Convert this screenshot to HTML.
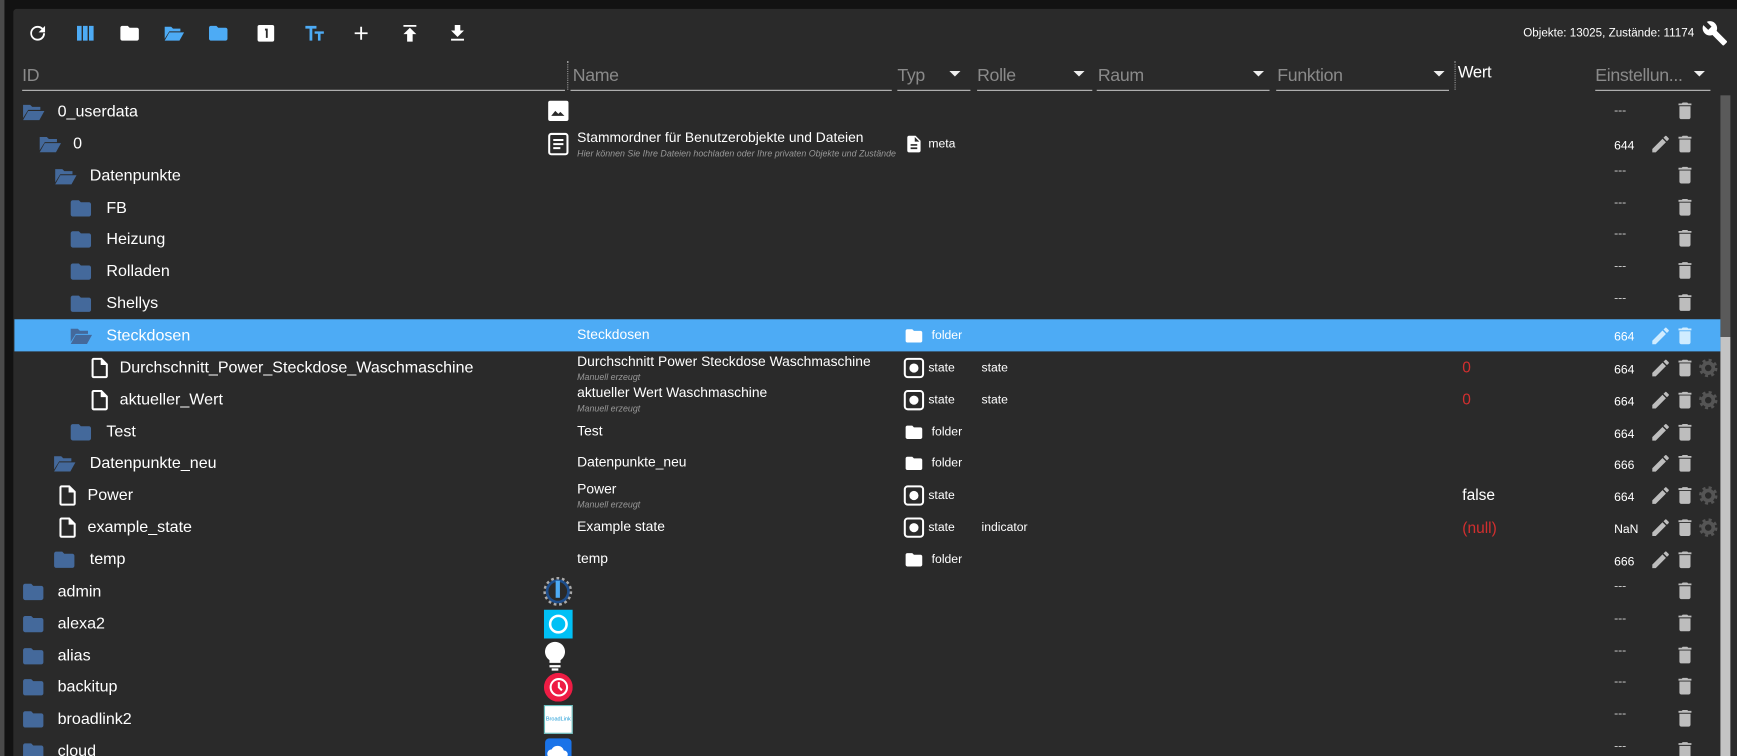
<!DOCTYPE html>
<html><head><meta charset="utf-8">
<style>
html,body{margin:0;padding:0;width:1737px;height:756px;overflow:hidden;background:#121212;}
#w{position:absolute;left:0;top:0;width:1568px;height:682px;overflow:hidden;transform:scale(1.1078,1.1085);transform-origin:0 0;font-family:"Liberation Sans",sans-serif;color:#fff;}
.lstrip{position:absolute;left:0;top:0;width:4px;height:682px;background:#4a4a4a}
.panel{position:absolute;left:12px;top:8px;width:1556px;height:674px;background:#2a2a2a;border-radius:3px 0 0 0}
.a{position:absolute;white-space:nowrap}
.tb{position:absolute;top:20px;width:20px;height:20px}
.h{position:absolute;top:60px;font-size:16px;color:#8a8a8a;letter-spacing:-0.3px}
.ul{position:absolute;top:81px;height:1px;background:#bdbdbd}
.arr{position:absolute;top:64px;width:0;height:0;border-left:5px solid transparent;border-right:5px solid transparent;border-top:5px solid #eee}
.row{position:absolute;left:13px;width:1540px;height:29px}
.sel{background:#4dabf5}
.row .a{top:0;line-height:29px}
.id{font-size:14.5px;color:#fff;margin-top:1px}
.nm{font-size:12.5px;color:#fff}
.sub{font-size:8px;color:#999;font-style:italic}
.ty{font-size:11px;margin-top:2px}
.perm{font-size:11px;left:1444px}
.dash{font-size:11px;left:1444px;color:#ccc}
svg{display:block}
</style></head><body>
<div id="w">
<div class="lstrip"></div>
<div class="panel"></div>

<svg class="tb" style="left:24px" viewBox="0 0 24 24"><path fill="#fff" d="M17.65 6.350A7.960 7.960 0 0012 4a8 8 0 108 8h-2.1A6 6 0 1112 6c1.66 0 3.14.69 4.22 1.78L13 11h7V4l-2.35 2.35z"/></svg>
<svg class="tb" style="left:67px" viewBox="0 0 24 24"><path fill="#4dabf5" d="M3 4h5v16H3zM9.5 4h5v16h-5zM16 4h5v16h-5z"/></svg>
<svg class="tb" style="left:107px" viewBox="0 0 24 24"><path fill="#fff" d="M10 4H4c-1.1 0-2 .9-2 2v12c0 1.1.9 2 2 2h16c1.1 0 2-.9 2-2V8c0-1.1-.9-2-2-2h-8l-2-2z"/></svg>
<svg class="tb" style="left:147px" viewBox="0 0 24 24"><path fill="#4dabf5" d="M2 5h7l2 2h8v3H7l-5 8zM7 11h16l-5 9H2z"/></svg>
<svg class="tb" style="left:187px" viewBox="0 0 24 24"><path fill="#4dabf5" d="M10 4H4c-1.1 0-2 .9-2 2v12c0 1.1.9 2 2 2h16c1.1 0 2-.9 2-2V8c0-1.1-.9-2-2-2h-8l-2-2z"/></svg>
<svg class="tb" style="left:230px" viewBox="0 0 24 24"><rect x="3" y="3" width="18" height="18" rx="2" fill="#fff"/><path fill="#2a2a2a" d="M11 7h3v10h-2V9h-1z"/></svg>
<svg class="tb" style="left:274px" viewBox="0 0 24 24"><path fill="#4dabf5" d="M2 4h12v3H9.5v13h-3V7H2zM12 10h10v2.5h-3.6V20h-2.8v-7.5H12z"/></svg>
<svg class="tb" style="left:316px" viewBox="0 0 24 24"><path fill="#fff" d="M19 13h-6v6h-2v-6H5v-2h6V5h2v6h6z"/></svg>
<svg class="tb" style="left:360px" viewBox="0 0 24 24"><path fill="#fff" d="M5 3h14v2H5zM12 6l-7 7h4v8h6v-8h4z"/></svg>
<svg class="tb" style="left:403px" viewBox="0 0 24 24"><path fill="#fff" d="M19 9h-4V3H9v6H5l7 7 7-7zM5 18v2h14v-2z"/></svg>
<div class="a" style="left:1375px;top:24px;font-size:10.5px;color:#fff">Objekte: 13025, Zustände: 11174</div>
<svg class="tb" style="left:1536px;top:18px;width:24px;height:24px" viewBox="0 0 24 24"><path fill="#fff" d="M22.7 19l-9.1-9.1c.9-2.3.4-5-1.5-6.9-2-2-5-2.4-7.4-1.3L9 6 6 9 1.6 4.7C.4 7.1.9 10.1 2.9 12.1c1.9 1.9 4.6 2.4 6.9 1.5l9.1 9.1c.4.4 1 .4 1.4 0l2.3-2.3c.5-.4.5-1.1.1-1.4z"/></svg>

<div class="h" style="left:20px">ID</div><div class="ul" style="left:20px;width:490px"></div>
<div class="a" style="left:512px;top:55px;height:26px;border-left:1px dotted #999"></div>
<div class="h" style="left:517px">Name</div><div class="ul" style="left:515px;width:290px"></div>
<div class="h" style="left:810px">Typ</div><div class="ul" style="left:810px;width:66px"></div><div class="arr" style="left:857px"></div>
<div class="h" style="left:882px">Rolle</div><div class="ul" style="left:882px;width:104px"></div><div class="arr" style="left:969px"></div>
<div class="h" style="left:991px">Raum</div><div class="ul" style="left:990px;width:156px"></div><div class="arr" style="left:1131px"></div>
<div class="h" style="left:1153px">Funktion</div><div class="ul" style="left:1152px;width:156px"></div><div class="arr" style="left:1294px"></div>
<div class="a" style="left:1313px;top:55px;height:26px;border-left:1px dotted #999"></div>
<div class="h" style="left:1316px;top:57px;color:#fff;font-size:15px">Wert</div>
<div class="h" style="left:1440px">Einstellun...</div><div class="ul" style="left:1440px;width:104px"></div><div class="arr" style="left:1529px"></div>

<div class="a" style="left:1553px;top:86px;width:9px;height:218px;background:#5a5a5a"></div>
<div class="a" style="left:1553px;top:304px;width:9px;height:378px;background:#c4c4c4"></div>

<svg width="0" height="0" style="position:absolute">
<defs>
<symbol id="fc" viewBox="0 0 24 24"><path fill="#44699b" d="M10 4H4c-1.1 0-2 .9-2 2v12c0 1.1.9 2 2 2h16c1.1 0 2-.9 2-2V8c0-1.1-.9-2-2-2h-8l-2-2z"/></symbol>
<symbol id="fo" viewBox="0 0 24 24"><path fill="#44699b" d="M2 5h7l2 2h8v3H7l-5 8zM7 11h16l-5 9H2z"/></symbol>
<symbol id="fw" viewBox="0 0 24 24"><path fill="#fff" d="M10 4H4c-1.1 0-2 .9-2 2v12c0 1.1.9 2 2 2h16c1.1 0 2-.9 2-2V8c0-1.1-.9-2-2-2h-8l-2-2z"/></symbol>
<symbol id="fi" viewBox="0 0 24 24"><path fill="#fff" d="M14 2H6c-1.1 0-2 .9-2 2v16c0 1.1.9 2 2 2h12c1.1 0 2-.9 2-2V8l-6-6zM6 20V4h7v5h5v11H6z"/></symbol>
<symbol id="tr" viewBox="0 0 24 24"><path fill="#bdbdbd" d="M6 19c0 1.1.9 2 2 2h8c1.1 0 2-.9 2-2V7H6v12zM19 4h-3.5l-1-1h-5l-1 1H5v2h14V4z"/></symbol>
<symbol id="pe" viewBox="0 0 24 24"><path fill="#bdbdbd" d="M3 17.25V21h3.75L17.81 9.94l-3.75-3.75L3 17.25zM20.71 7.04a1 1 0 000-1.41l-2.34-2.34a1 1 0 00-1.41 0l-1.83 1.83 3.75 3.75 1.83-1.83z"/></symbol>
<symbol id="ge" viewBox="0 0 24 24"><circle cx="12" cy="12" r="8.5" fill="none" stroke="#555" stroke-width="3" stroke-dasharray="3.3 3.4"/><circle cx="12" cy="12" r="5.5" fill="none" stroke="#555" stroke-width="4"/></symbol>
<symbol id="st" viewBox="0 0 24 24"><rect x="3" y="3" width="18" height="18" rx="3" fill="none" stroke="#fff" stroke-width="2"/><circle cx="12" cy="12" r="4.5" fill="#fff"/></symbol>
</defs></svg>

<div class="row" style="top:86px">
 <svg class="a" style="left:6px;top:4px;width:22px;height:22px"><use href="#fo"/></svg>
 <div class="a id" style="left:39px">0_userdata</div>
 <svg class="a" style="left:480px;top:3px;width:22px;height:22px" viewBox="0 0 24 24"><rect x="2" y="2" width="20" height="20" rx="2" fill="#fff"/><path d="M5 17l4-5 3 3 2-2 4 4z" fill="#2a2a2a"/></svg>
 <div class="a dash">---</div><svg class="a" style="left:1498px;top:4px;width:20px;height:20px"><use href="#tr"/></svg>
</div>
<div class="row" style="top:115px">
 <svg class="a" style="left:21px;top:4px;width:22px;height:22px"><use href="#fo"/></svg>
 <div class="a id" style="left:53px">0</div>
 <svg class="a" style="left:480px;top:4px;width:22px;height:22px" viewBox="0 0 24 24"><rect x="3" y="2" width="18" height="20" rx="2" fill="none" stroke="#fff" stroke-width="2"/><path fill="#fff" d="M7 7h10v2H7zM7 11h10v2H7zM7 15h7v2H7z"/></svg>
 <div class="a nm" style="left:508px;line-height:normal;top:2px">Stammordner für Benutzerobjekte und Dateien</div>
 <div class="a sub" style="left:508px;line-height:normal;top:19px;width:292px;overflow:hidden">Hier können Sie Ihre Dateien hochladen oder Ihre privaten Objekte und Zustände</div>
 <svg class="a" style="left:803px;top:5px;width:18px;height:20px" viewBox="0 0 24 24"><path fill="#fff" d="M14 2H6c-1.1 0-2 .9-2 2v16c0 1.1.9 2 2 2h12c1.1 0 2-.9 2-2V8l-6-6zM16 18H8v-2h8v2zm0-4H8v-2h8v2zm-3-5V3.5L18.5 9H13z"/></svg>
 <div class="a ty" style="left:825px;top:-1px">meta</div>
 <div class="a perm" style="top:3px">644</div>
 <svg class="a" style="left:1476px;top:5px;width:20px;height:20px"><use href="#pe"/></svg><svg class="a" style="left:1498px;top:5px;width:20px;height:20px"><use href="#tr"/></svg>
</div>
<div class="row" style="top:144px">
 <svg class="a" style="left:35px;top:4px;width:22px;height:22px"><use href="#fo"/></svg>
 <div class="a id" style="left:68px">Datenpunkte</div>
 <div class="a dash" style="top:-4px">---</div><svg class="a" style="left:1498px;top:4px;width:20px;height:20px"><use href="#tr"/></svg>
</div>
<div class="row" style="top:173px">
 <svg class="a" style="left:49px;top:4px;width:22px;height:22px"><use href="#fc"/></svg>
 <div class="a id" style="left:83px">FB</div>
 <div class="a dash" style="top:-4px">---</div><svg class="a" style="left:1498px;top:4px;width:20px;height:20px"><use href="#tr"/></svg>
</div>
<div class="row" style="top:201px">
 <svg class="a" style="left:49px;top:4px;width:22px;height:22px"><use href="#fc"/></svg>
 <div class="a id" style="left:83px">Heizung</div>
 <div class="a dash" style="top:-4px">---</div><svg class="a" style="left:1498px;top:4px;width:20px;height:20px"><use href="#tr"/></svg>
</div>
<div class="row" style="top:230px">
 <svg class="a" style="left:49px;top:4px;width:22px;height:22px"><use href="#fc"/></svg>
 <div class="a id" style="left:83px">Rolladen</div>
 <div class="a dash" style="top:-4px">---</div><svg class="a" style="left:1498px;top:4px;width:20px;height:20px"><use href="#tr"/></svg>
</div>
<div class="row" style="top:259px">
 <svg class="a" style="left:49px;top:4px;width:22px;height:22px"><use href="#fc"/></svg>
 <div class="a id" style="left:83px">Shellys</div>
 <div class="a dash" style="top:-4px">---</div><svg class="a" style="left:1498px;top:4px;width:20px;height:20px"><use href="#tr"/></svg>
</div>
<div class="row sel" style="top:288px">
 <svg class="a" style="left:49px;top:4px;width:22px;height:22px"><use href="#fo"/></svg>
 <div class="a id" style="left:83px">Steckdosen</div>
 <div class="a nm" style="left:508px">Steckdosen</div>
 <svg class="a" style="left:803px;top:6px;width:18px;height:18px"><use href="#fw"/></svg>
 <div class="a ty" style="left:828px;top:-1px">folder</div>
 <div class="a perm" style="top:2px">664</div>
 <svg class="a" style="left:1476px;top:5px;width:20px;height:20px" viewBox="0 0 24 24"><path fill="#d0ecff" d="M3 17.25V21h3.75L17.81 9.94l-3.75-3.75L3 17.25zM20.71 7.04a1 1 0 000-1.41l-2.34-2.34a1 1 0 00-1.41 0l-1.83 1.83 3.75 3.75 1.83-1.83z"/></svg>
 <svg class="a" style="left:1498px;top:5px;width:20px;height:20px" viewBox="0 0 24 24"><path fill="#d0ecff" d="M6 19c0 1.1.9 2 2 2h8c1.1 0 2-.9 2-2V7H6v12zM19 4h-3.5l-1-1h-5l-1 1H5v2h14V4z"/></svg>
</div>
<div class="row" style="top:317px">
 <svg class="a" style="left:66px;top:4px;width:22px;height:22px"><use href="#fi"/></svg>
 <div class="a id" style="left:95px">Durchschnitt_Power_Steckdose_Waschmaschine</div>
 <div class="a nm" style="left:508px;line-height:normal;top:2px">Durchschnitt Power Steckdose Waschmaschine</div>
 <div class="a sub" style="left:508px;line-height:normal;top:19px">Manuell erzeugt</div>
 <svg class="a" style="left:801px;top:4px;width:22px;height:22px"><use href="#st"/></svg>
 <div class="a ty" style="left:825px;top:-1px">state</div>
 <div class="a ty" style="left:873px;top:-1px">state</div>
 <div class="a" style="left:1307px;top:0px;font-size:14px;color:#d32f2f">0</div>
 <div class="a perm" style="top:3px">664</div>
 <svg class="a" style="left:1476px;top:5px;width:20px;height:20px"><use href="#pe"/></svg><svg class="a" style="left:1498px;top:5px;width:20px;height:20px"><use href="#tr"/></svg><svg class="a" style="left:1519px;top:5px;width:20px;height:20px"><use href="#ge"/></svg>
</div>
<div class="row" style="top:346px">
 <svg class="a" style="left:66px;top:4px;width:22px;height:22px"><use href="#fi"/></svg>
 <div class="a id" style="left:95px">aktueller_Wert</div>
 <div class="a nm" style="left:508px;line-height:normal;top:1px">aktueller Wert Waschmaschine</div>
 <div class="a sub" style="left:508px;line-height:normal;top:18px">Manuell erzeugt</div>
 <svg class="a" style="left:801px;top:4px;width:22px;height:22px"><use href="#st"/></svg>
 <div class="a ty" style="left:825px;top:-1px">state</div>
 <div class="a ty" style="left:873px;top:-1px">state</div>
 <div class="a" style="left:1307px;top:0px;font-size:14px;color:#d32f2f">0</div>
 <div class="a perm" style="top:3px">664</div>
 <svg class="a" style="left:1476px;top:5px;width:20px;height:20px"><use href="#pe"/></svg><svg class="a" style="left:1498px;top:5px;width:20px;height:20px"><use href="#tr"/></svg><svg class="a" style="left:1519px;top:5px;width:20px;height:20px"><use href="#ge"/></svg>
</div>
<div class="row" style="top:375px">
 <svg class="a" style="left:49px;top:4px;width:22px;height:22px"><use href="#fc"/></svg>
 <div class="a id" style="left:83px">Test</div>
 <div class="a nm" style="left:508px">Test</div>
 <svg class="a" style="left:803px;top:6px;width:18px;height:18px"><use href="#fw"/></svg>
 <div class="a ty" style="left:828px;top:-1px">folder</div>
 <div class="a perm" style="top:3px">664</div>
 <svg class="a" style="left:1476px;top:5px;width:20px;height:20px"><use href="#pe"/></svg><svg class="a" style="left:1498px;top:5px;width:20px;height:20px"><use href="#tr"/></svg>
</div>
<div class="row" style="top:403px">
 <svg class="a" style="left:34px;top:4px;width:22px;height:22px"><use href="#fo"/></svg>
 <div class="a id" style="left:68px">Datenpunkte_neu</div>
 <div class="a nm" style="left:508px">Datenpunkte_neu</div>
 <svg class="a" style="left:803px;top:6px;width:18px;height:18px"><use href="#fw"/></svg>
 <div class="a ty" style="left:828px;top:-1px">folder</div>
 <div class="a perm" style="top:3px">666</div>
 <svg class="a" style="left:1476px;top:5px;width:20px;height:20px"><use href="#pe"/></svg><svg class="a" style="left:1498px;top:5px;width:20px;height:20px"><use href="#tr"/></svg>
</div>
<div class="row" style="top:432px">
 <svg class="a" style="left:37px;top:4px;width:22px;height:22px"><use href="#fi"/></svg>
 <div class="a id" style="left:66px">Power</div>
 <div class="a nm" style="left:508px;line-height:normal;top:2px">Power</div>
 <div class="a sub" style="left:508px;line-height:normal;top:19px">Manuell erzeugt</div>
 <svg class="a" style="left:801px;top:4px;width:22px;height:22px"><use href="#st"/></svg>
 <div class="a ty" style="left:825px;top:-1px">state</div>
 <div class="a" style="left:1307px;top:0px;font-size:14px;color:#fff">false</div>
 <div class="a perm" style="top:3px">664</div>
 <svg class="a" style="left:1476px;top:5px;width:20px;height:20px"><use href="#pe"/></svg><svg class="a" style="left:1498px;top:5px;width:20px;height:20px"><use href="#tr"/></svg><svg class="a" style="left:1519px;top:5px;width:20px;height:20px"><use href="#ge"/></svg>
</div>
<div class="row" style="top:461px">
 <svg class="a" style="left:37px;top:4px;width:22px;height:22px"><use href="#fi"/></svg>
 <div class="a id" style="left:66px">example_state</div>
 <div class="a nm" style="left:508px">Example state</div>
 <svg class="a" style="left:801px;top:4px;width:22px;height:22px"><use href="#st"/></svg>
 <div class="a ty" style="left:825px;top:-1px">state</div>
 <div class="a ty" style="left:873px;top:-1px">indicator</div>
 <div class="a" style="left:1307px;top:1px;font-size:14px;color:#d32f2f">(null)</div>
 <div class="a perm" style="top:3px">NaN</div>
 <svg class="a" style="left:1476px;top:5px;width:20px;height:20px"><use href="#pe"/></svg><svg class="a" style="left:1498px;top:5px;width:20px;height:20px"><use href="#tr"/></svg><svg class="a" style="left:1519px;top:5px;width:20px;height:20px"><use href="#ge"/></svg>
</div>
<div class="row" style="top:490px">
 <svg class="a" style="left:34px;top:4px;width:22px;height:22px"><use href="#fc"/></svg>
 <div class="a id" style="left:68px">temp</div>
 <div class="a nm" style="left:508px">temp</div>
 <svg class="a" style="left:803px;top:6px;width:18px;height:18px"><use href="#fw"/></svg>
 <div class="a ty" style="left:828px;top:-1px">folder</div>
 <div class="a perm" style="top:3px">666</div>
 <svg class="a" style="left:1476px;top:5px;width:20px;height:20px"><use href="#pe"/></svg><svg class="a" style="left:1498px;top:5px;width:20px;height:20px"><use href="#tr"/></svg>
</div>
<div class="row" style="top:519px">
 <svg class="a" style="left:6px;top:4px;width:22px;height:22px"><use href="#fc"/></svg>
 <div class="a id" style="left:39px">admin</div>
 <svg class="a" style="left:477px;top:1px;width:27px;height:27px" viewBox="0 0 28 28"><circle cx="14" cy="14" r="12" fill="none" stroke="#aaa" stroke-width="3" stroke-dasharray="2.5 2.5"/><circle cx="14" cy="14" r="10" fill="none" stroke="#1e4e8c" stroke-width="2.5"/><rect x="12" y="4" width="4" height="16" fill="#4dabf5"/></svg>
 <div class="a dash" style="top:-4px">---</div><svg class="a" style="left:1498px;top:4px;width:20px;height:20px"><use href="#tr"/></svg>
</div>
<div class="row" style="top:548px">
 <svg class="a" style="left:6px;top:4px;width:22px;height:22px"><use href="#fc"/></svg>
 <div class="a id" style="left:39px">alexa2</div>
 <svg class="a" style="left:478px;top:2px;width:26px;height:26px" viewBox="0 0 28 28"><rect width="28" height="28" fill="#00c0f5"/><circle cx="14" cy="14" r="8" fill="none" stroke="#fff" stroke-width="2.5"/></svg>
 <div class="a dash" style="top:-4px">---</div><svg class="a" style="left:1498px;top:4px;width:20px;height:20px"><use href="#tr"/></svg>
</div>
<div class="row" style="top:577px">
 <svg class="a" style="left:6px;top:4px;width:22px;height:22px"><use href="#fc"/></svg>
 <div class="a id" style="left:39px">alias</div>
 <svg class="a" style="left:477px;top:1px;width:22px;height:28px" viewBox="0 0 20 28"><path fill="#fff" d="M10 1a9 9 0 00-5 16.5V20h10v-2.5A9 9 0 0010 1zM5 22h10v2H5zM7 25h6v2H7z"/></svg>
 <div class="a dash" style="top:-4px">---</div><svg class="a" style="left:1498px;top:4px;width:20px;height:20px"><use href="#tr"/></svg>
</div>
<div class="row" style="top:605px">
 <svg class="a" style="left:6px;top:4px;width:22px;height:22px"><use href="#fc"/></svg>
 <div class="a id" style="left:39px">backitup</div>
 <svg class="a" style="left:478px;top:2px;width:26px;height:26px" viewBox="0 0 28 28"><circle cx="14" cy="14" r="14" fill="#ee1c44"/><circle cx="14.5" cy="14" r="8" fill="none" stroke="#fff" stroke-width="2"/><path d="M14.5 9v5l3 3" stroke="#fff" stroke-width="2" fill="none"/></svg>
 <div class="a dash" style="top:-4px">---</div><svg class="a" style="left:1498px;top:4px;width:20px;height:20px"><use href="#tr"/></svg>
</div>
<div class="row" style="top:634px">
 <svg class="a" style="left:6px;top:4px;width:22px;height:22px"><use href="#fc"/></svg>
 <div class="a id" style="left:39px">broadlink2</div>
 <div class="a" style="left:478px;top:2px;width:24px;height:24px;background:#fff;border:1px solid #6bb;font-size:5px;line-height:24px;color:#1a9ad6;text-align:center;overflow:hidden">BroadLink</div>
 <div class="a dash" style="top:-4px">---</div><svg class="a" style="left:1498px;top:4px;width:20px;height:20px"><use href="#tr"/></svg>
</div>
<div class="row" style="top:663px">
 <svg class="a" style="left:6px;top:4px;width:22px;height:22px"><use href="#fc"/></svg>
 <div class="a id" style="left:39px">cloud</div>
 <svg class="a" style="left:479px;top:3px;width:24px;height:24px" viewBox="0 0 24 24"><rect width="24" height="24" rx="4" fill="#1a73e8"/><path fill="#fff" d="M6 18a4 4 0 010-8 6 6 0 0111 1 3.5 3.5 0 010 7z"/></svg>
 <div class="a dash" style="top:-4px">---</div><svg class="a" style="left:1498px;top:4px;width:20px;height:20px"><use href="#tr"/></svg>
</div>
</div>
</body></html>
